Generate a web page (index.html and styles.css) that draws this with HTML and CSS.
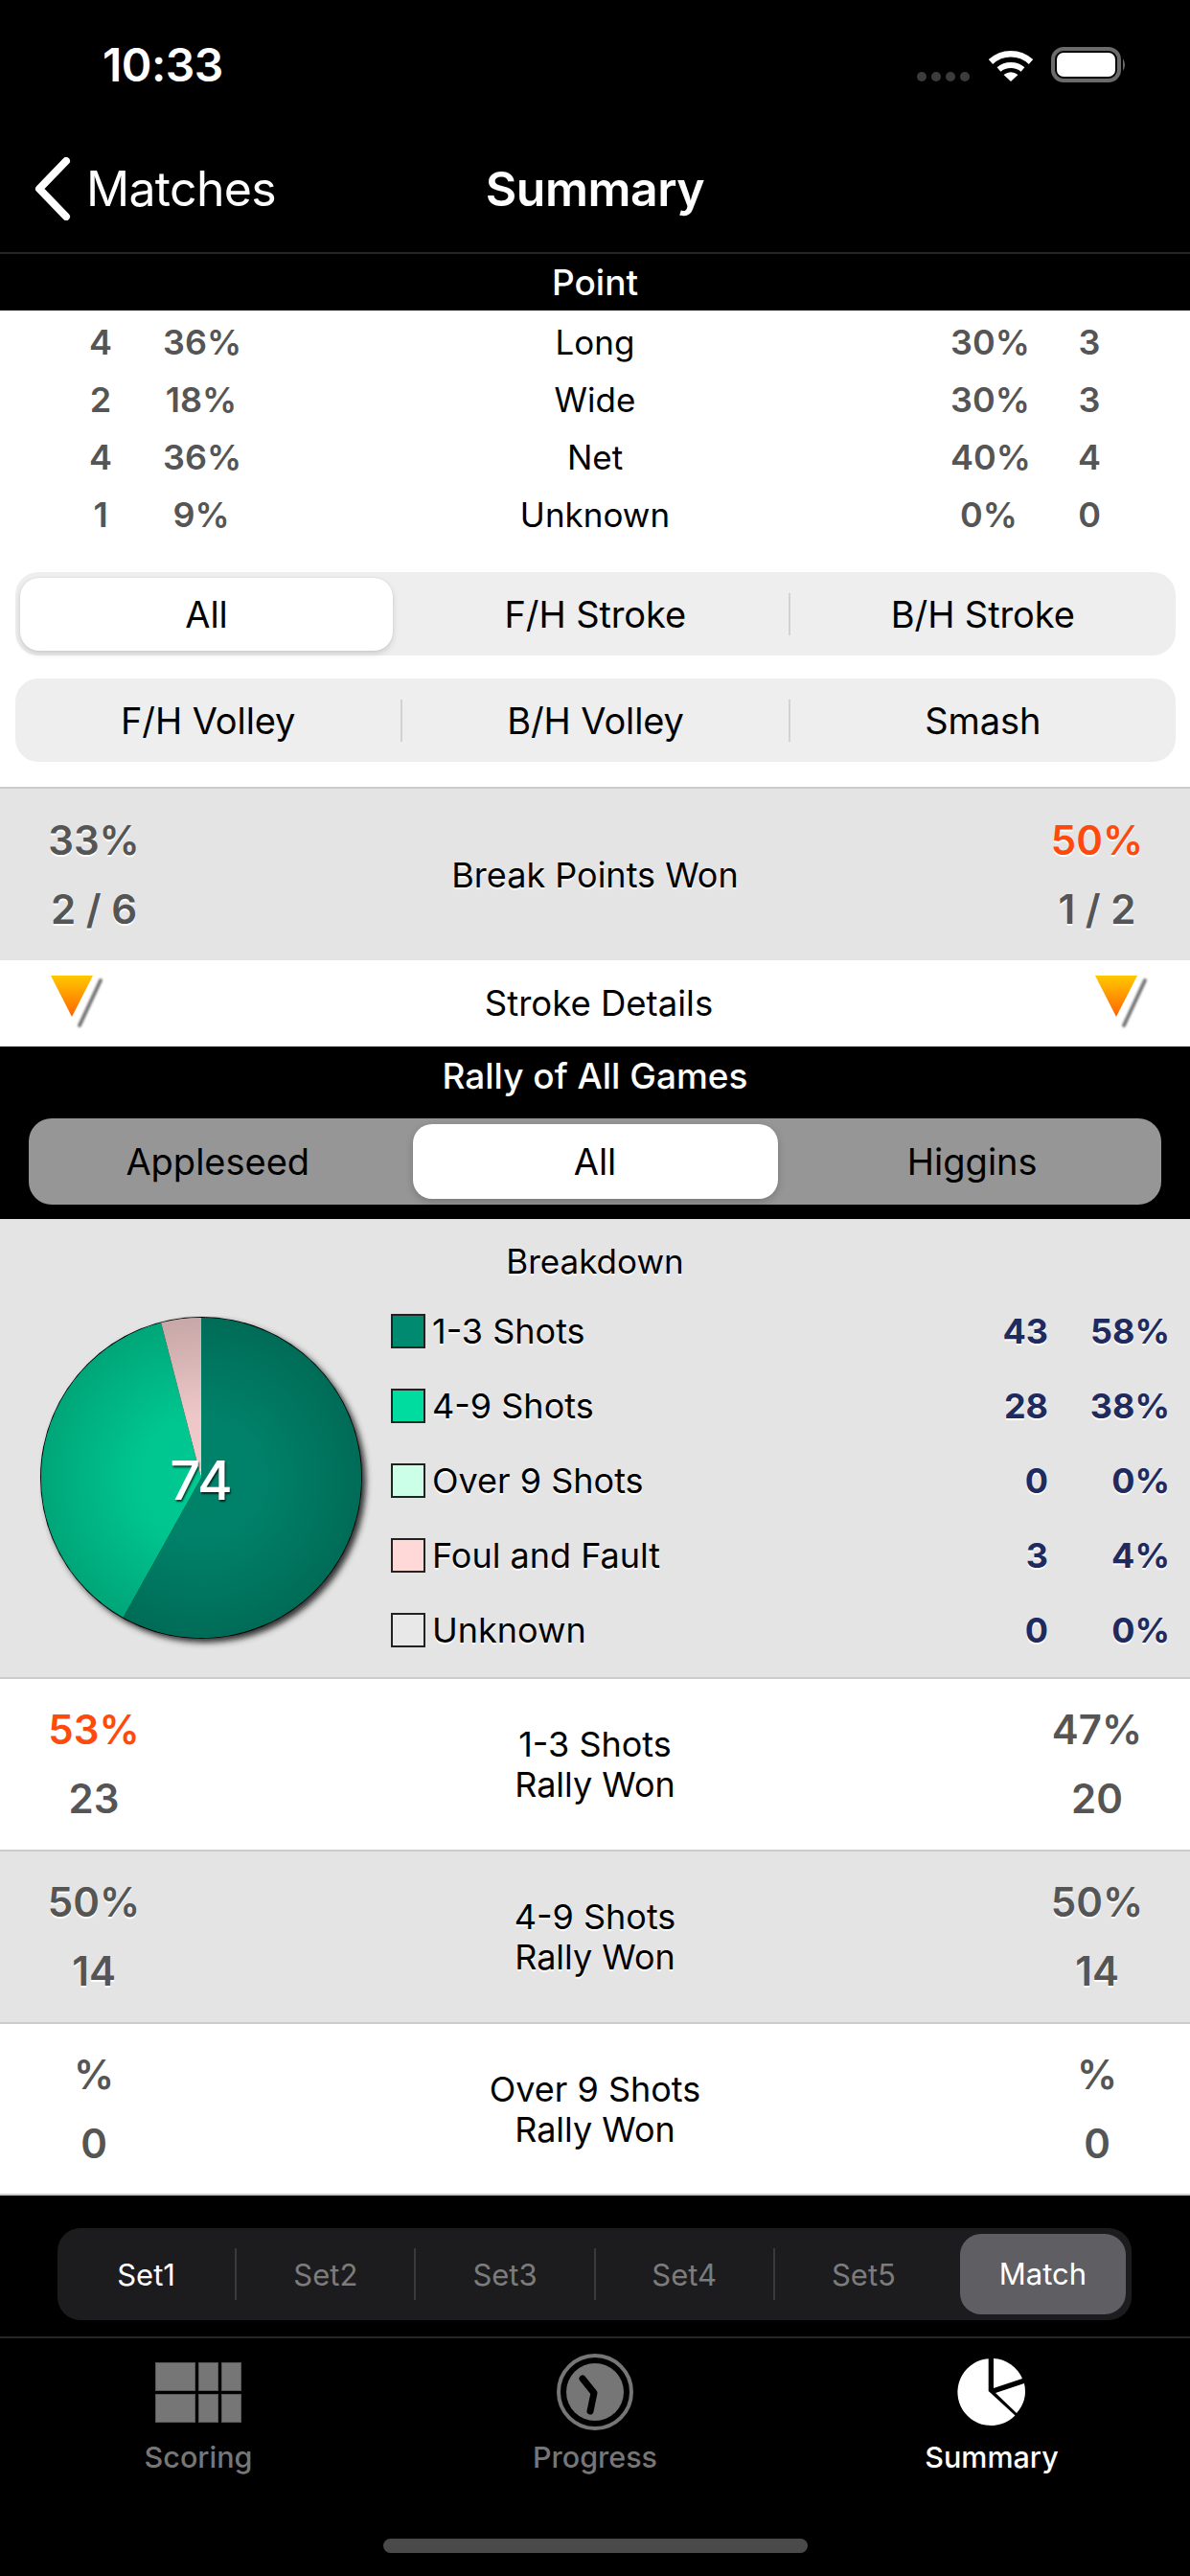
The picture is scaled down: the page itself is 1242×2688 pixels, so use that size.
FILE: index.html
```html
<!DOCTYPE html>
<html lang="en">
<head>
<meta charset="utf-8">
<title>Summary</title>
<link rel="stylesheet" href="styles.css">
</head>
<body>
<div class="page">
  <div class="status">
    <span class="time">10:33</span>
    <div class="status-icons">
      <div class="dots"><i></i><i></i><i></i><i></i></div>
      <svg class="wifi" width="48" height="37" viewBox="0 0 48 37"><path d="M3 15.500C15 4.500 33 4.500 45 15.500" fill="none" stroke="#fff" stroke-width="6.500"/><path d="M11.500 23.500C18.500 17.500 29.500 17.500 36.500 23.500" fill="none" stroke="#fff" stroke-width="6"/><path d="M24 36L16.500 29Q24 23.500 31.500 29Z" fill="#fff"/></svg>
      <svg class="battery" width="80" height="37" viewBox="0 0 80 37"><rect x="2" y="2" width="69" height="33" rx="11" fill="none" stroke="#6b6b6b" stroke-width="4"/><rect x="6" y="6" width="61" height="25" rx="7" fill="#fff"/><path d="M75 12Q79 18.500 75 25Z" fill="#6b6b6b"/></svg>
    </div>
  </div>
  <div class="nav">
    <div class="back">
      <svg width="44" height="66" viewBox="0 0 44 66"><path d="M36 4L8 33L36 62" fill="none" stroke="#fff" stroke-width="8" stroke-linecap="round" stroke-linejoin="round"/></svg>
      <span>Matches</span>
    </div>
    <div class="nav-title">Summary</div>
    <div></div>
  </div>

  <div class="head">Point</div>
  <div class="point-block">
    <div class="prow"><b>4</b><b>36%</b><span>Long</span><b>30%</b><b>3</b></div>
    <div class="prow"><b>2</b><b>18%</b><span>Wide</span><b>30%</b><b>3</b></div>
    <div class="prow"><b>4</b><b>36%</b><span>Net</span><b>40%</b><b>4</b></div>
    <div class="prow"><b>1</b><b>9%</b><span>Unknown</span><b>0%</b><b>0</b></div>

    <div class="seg seg-first">
      <div class="seg-item seg-on">All</div>
      <i class="seg-div seg-div-hide"></i>
      <div class="seg-item">F/H Stroke</div>
      <i class="seg-div"></i>
      <div class="seg-item">B/H Stroke</div>
    </div>
    <div class="seg seg-second">
      <div class="seg-item">F/H Volley</div>
      <i class="seg-div"></i>
      <div class="seg-item">B/H Volley</div>
      <i class="seg-div"></i>
      <div class="seg-item">Smash</div>
    </div>
  </div>

  <div class="stat stat-break gray">
    <div class="vals"><b>33%</b><b>2 / 6</b></div>
    <div class="stat-label">Break Points Won</div>
    <div class="vals"><b class="orange">50%</b><b>1 / 2</b></div>
  </div>
  <div class="details">
    <svg width="64" height="62" viewBox="0 0 64 62"><defs><linearGradient id="tg" x1="0" y1="0" x2="0" y2="1"><stop offset="0" stop-color="#ffc800"/><stop offset="1" stop-color="#ff6400"/></linearGradient><filter id="bl" x="-50%" y="-20%" width="200%" height="140%"><feGaussianBlur stdDeviation="1.200"/></filter></defs><path d="M57 7L35 54" stroke="#777" stroke-width="4" stroke-linecap="round" filter="url(#bl)"/><path d="M5 2H49L27 45Z" fill="url(#tg)"/></svg>
    <span>Stroke Details</span>
    <svg width="64" height="62" viewBox="0 0 64 62"><path d="M57 7L35 54" stroke="#777" stroke-width="4" stroke-linecap="round" filter="url(#bl)"/><path d="M5 2H49L27 45Z" fill="url(#tg)"/></svg>
  </div>

  <div class="rally">
    <div class="rally-title">Rally of All Games</div>
    <div class="pick">
      <div class="pick-item">Appleseed</div>
      <div class="pick-item pick-on">All</div>
      <div class="pick-item">Higgins</div>
    </div>
  </div>

  <div class="breakdown">
    <div class="bd-title">Breakdown</div>
    <div class="pie-wrap">
      <svg class="pie" width="370" height="370" viewBox="0 0 370 370">
        <defs>
          <radialGradient id="shade"><stop offset="0" stop-color="#000" stop-opacity="0.05"/><stop offset="0.4" stop-color="#000" stop-opacity="0.07"/><stop offset="1" stop-color="#000" stop-opacity="0.22"/></radialGradient>
          <filter id="ps" x="-10%" y="-10%" width="120%" height="120%"><feGaussianBlur stdDeviation="3"/></filter>
        </defs>
        <circle cx="173" cy="173" r="168" fill="#333" filter="url(#ps)"/>
        <circle cx="169" cy="169" r="168" fill="#000"/>
        <path d="M169 169V2A167 167 0 1 1 87.600 314.800Z" fill="#008a70"/>
        <path d="M169 169L87.600 314.800A167 167 0 0 1 127.100 7.300Z" fill="#00d49a"/>
        <path d="M169 169L127.100 7.300A167 167 0 0 1 169 2Z" fill="#ffd6d6"/>
        <circle cx="169" cy="169" r="167" fill="url(#shade)"/>
      </svg>
      <div class="pie-num">74</div>
    </div>
    <div class="legend">
      <div class="lrow"><i class="sw sw1"></i><span>1-3 Shots</span><b>43</b><b>58%</b></div>
      <div class="lrow"><i class="sw sw2"></i><span>4-9 Shots</span><b>28</b><b>38%</b></div>
      <div class="lrow"><i class="sw sw3"></i><span>Over 9 Shots</span><b>0</b><b>0%</b></div>
      <div class="lrow"><i class="sw sw4"></i><span>Foul and Fault</span><b>3</b><b>4%</b></div>
      <div class="lrow"><i class="sw sw5"></i><span>Unknown</span><b>0</b><b>0%</b></div>
    </div>
  </div>

  <div class="stat white">
    <div class="vals"><b class="orange">53%</b><b>23</b></div>
    <div class="stat-label">1-3 Shots<br>Rally Won</div>
    <div class="vals"><b>47%</b><b>20</b></div>
  </div>
  <div class="stat gray">
    <div class="vals"><b>50%</b><b>14</b></div>
    <div class="stat-label">4-9 Shots<br>Rally Won</div>
    <div class="vals"><b>50%</b><b>14</b></div>
  </div>
  <div class="stat white stat-last">
    <div class="vals"><b>%</b><b>0</b></div>
    <div class="stat-label">Over 9 Shots<br>Rally Won</div>
    <div class="vals"><b>%</b><b>0</b></div>
  </div>

  <div class="sets">
    <div class="set set-active">Set1</div><i class="set-div"></i>
    <div class="set">Set2</div><i class="set-div"></i>
    <div class="set">Set3</div><i class="set-div"></i>
    <div class="set">Set4</div><i class="set-div"></i>
    <div class="set">Set5</div>
    <div class="set set-on">Match</div>
  </div>

  <div class="tabs">
    <div class="tab">
      <div class="tab-icon">
        <svg width="90" height="63" viewBox="0 0 90 63"><g fill="#767676" stroke="#5a5a5a" stroke-width="1"><rect x="0.500" y="0.500" width="41" height="29"/><rect x="45.500" y="0.500" width="20" height="29"/><rect x="69.500" y="0.500" width="20" height="29"/><rect x="0.500" y="33.500" width="41" height="29"/><rect x="45.500" y="33.500" width="20" height="29"/><rect x="69.500" y="33.500" width="20" height="29"/></g></svg>
      </div>
      <span>Scoring</span>
    </div>
    <div class="tab">
      <div class="tab-icon">
        <svg width="80" height="80" viewBox="0 0 80 80"><circle cx="40" cy="40" r="38" fill="none" stroke="#767676" stroke-width="4"/><circle cx="40" cy="40" r="30" fill="#767676"/><path d="M27 26L39 41L35 60" fill="none" stroke="#000" stroke-width="7" stroke-linecap="round" stroke-linejoin="round"/></svg>
      </div>
      <span>Progress</span>
    </div>
    <div class="tab tab-on">
      <div class="tab-icon">
        <svg width="80" height="80" viewBox="0 0 80 80"><g fill="#fff"><path d="M36.700 5.200V39L64.500 64.500A35 35 0 1 1 36.700 5.200Z"/><path d="M42 5V36L72 26A35 35 0 0 0 42 5Z"/><path d="M44 41L74 31A35 35 0 0 1 66 62Z"/></g></svg>
      </div>
      <span>Summary</span>
    </div>
  </div>
  <div class="home"></div>
</div>
</body>
</html>
```
FILE: styles.css
```css
* { box-sizing: border-box; }
html, body { margin: 0; padding: 0; background: #000; }
body { width: 1242px; height: 2688px; overflow: hidden; font-family: Inter, "Liberation Sans", sans-serif; color: #000; }
.page { width: 1242px; height: 2688px; display: flex; flex-direction: column; background: #000; }
i { font-style: normal; display: block; }

.status { height: 132px; display: flex; justify-content: space-between; align-items: flex-start; padding: 45px 65px 0 107px; color: #fff; }
.time { font-size: 48px; font-weight: 600; line-height: 46px; letter-spacing: -0.5px; }
.status-icons { display: flex; align-items: flex-start; padding-top: 4px; }
.dots { display: flex; gap: 5px; margin-top: 26px; margin-right: 19px; }
.dots i { width: 10px; height: 10px; border-radius: 50%; background: #3c3c3c; }
.wifi { margin-right: 18px; }

.nav { height: 133px; display: grid; grid-template-columns: 1fr auto 1fr; align-items: center; border-bottom: 2px solid #262626; color: #fff; padding-bottom: 2px; }
.back { display: flex; align-items: center; padding-left: 33px; font-size: 50px; letter-spacing: -0.7px; gap: 13px; }
.nav-title { font-size: 50px; font-weight: 600; letter-spacing: -0.5px; }

.head { height: 59px; display: flex; align-items: center; justify-content: center; color: #fff; font-size: 37px; font-weight: 500; }

.point-block { background: #fff; padding: 3px 0 26px; }
.prow { height: 60px; display: grid; grid-template-columns: 80px 80px 1fr 80px 80px; column-gap: 25px; padding: 0 65px; align-items: center; text-align: center; font-size: 35px; }
.prow b { font-weight: 600; color: #555; white-space: nowrap; font-size: 36px; }

.seg { height: 87px; margin: 0 15px 0 16px; background: #eeeeee; border-radius: 24px; display: flex; align-items: center; font-size: 38px; letter-spacing: -0.1px; }
.seg-first { margin-top: 30px; }
.seg-second { margin-top: 24px; }
.seg-item { flex: 1; height: 100%; display: flex; align-items: center; justify-content: center; white-space: nowrap; }
.seg-on { flex: 0 0 389px; height: 76px; margin: 0 8px 0 5px; background: #fff; border-radius: 20px; box-shadow: 0 3px 6px rgba(0,0,0,.14), 0 0 2px rgba(0,0,0,.08); }
.seg-div { flex: 0 0 2px; height: 44px; background: #d2d2d2; }
.seg-div-hide { background: transparent; }

.stat { height: 180px; display: grid; grid-template-columns: 196px 1fr 194px; align-items: center; border-top: 2px solid #cccccc; text-align: center; }
.stat-break { height: 181px; }
.gray { background: #e4e4e4; }
.white { background: #fff; }
.stat-label { font-size: 36px; line-height: 42px; text-shadow: 0 2px 1px #fff; margin-left: -2px; }
.vals { display: flex; flex-direction: column; }
.vals b { height: 72px; line-height: 72px; font-size: 42px; font-weight: 600; color: #555; text-shadow: 0 2px 1px #fff; white-space: nowrap; }
.vals .orange { color: #ff4a0c; }
.stat-last { height: 181px; border-bottom: 2px solid #ccc; }

.details { height: 90px; background: #fff; display: flex; align-items: center; justify-content: space-between; padding: 0 40px 0 48px; font-size: 36.500px; }

.rally { height: 180px; display: flex; flex-direction: column; }
.rally-title { height: 60px; display: flex; align-items: center; justify-content: center; color: #fff; font-size: 37px; font-weight: 500; }
.pick { height: 90px; margin: 15px 30px; background: #969696; border-radius: 24px; display: flex; align-items: center; font-size: 38px; }
.pick-item { flex: 1; text-align: center; }
.pick-on { flex: 0 0 381px; height: 78px; margin: 0 6px; line-height: 78px; background: #fff; border-radius: 20px; box-shadow: 0 3px 8px rgba(0,0,0,.2); }

.breakdown { height: 478px; background: #e4e4e4; display: grid; grid-template-columns: 408px 1fr; grid-template-rows: 78px 1fr; }
.bd-title { grid-column: 1 / -1; text-align: center; font-size: 35px; line-height: 88px; height: 78px; text-shadow: 0 2px 1px #fff; }
.pie-wrap { position: relative; padding: 23px 0 0 41px; }
.pie { display: block; }
.pie-num { position: absolute; left: 41px; top: 23px; width: 338px; height: 338px; display: flex; align-items: center; justify-content: center; color: #fff; font-size: 56px; font-weight: 500; padding-top: 5px; text-shadow: 1px 2px 2px rgba(0,0,0,.7); }
.legend { display: flex; flex-direction: column; padding-right: 21px; }
.lrow { height: 78px; display: grid; grid-template-columns: 36px 1fr 80px 127px; align-items: center; font-size: 36px; }
.lrow span { padding-left: 7px; text-shadow: 0 2px 1px #fff; }
.lrow b { text-align: right; font-weight: 700; color: #1f2b5f; font-size: 36px; text-shadow: 0 2px 1px #fff; }
.sw { width: 36px; height: 36px; border: 2px solid #222; }
.sw1 { background: #008a70; }
.sw2 { background: #00dc9f; }
.sw3 { background: #ccffe8; }
.sw4 { background: #ffd8d8; }
.sw5 { background: #e8e8e8; }

.sets { height: 96px; margin: 34px 61px 17px 60px; background: #1c1c1e; border-radius: 24px; display: flex; align-items: center; font-size: 31px; color: #7c7c7c; padding-right: 6px; }
.set { flex: 1; text-align: center; }
.set-active { color: #fff; }
.set-on { flex: 0 0 173px; height: 84px; line-height: 84px; margin-left: 8px; background: #5f5f63; border-radius: 22px; color: #fff; }
.set-div { flex: 0 0 2px; height: 54px; background: #3a3a3c; }

.tabs { flex: 1; display: flex; border-top: 2px solid #262626; padding-top: 10px; }
.tab { flex: 1; display: flex; flex-direction: column; align-items: center; color: #767676; font-size: 30.500px; font-weight: 500; }
.tab-icon { height: 92px; display: flex; align-items: center; justify-content: center; margin-bottom: 3px; }
.tab-on { color: #fff; }
.home { width: 443px; height: 15px; border-radius: 8px; background: #4a4a4a; margin: 0 auto 24px; }
```
